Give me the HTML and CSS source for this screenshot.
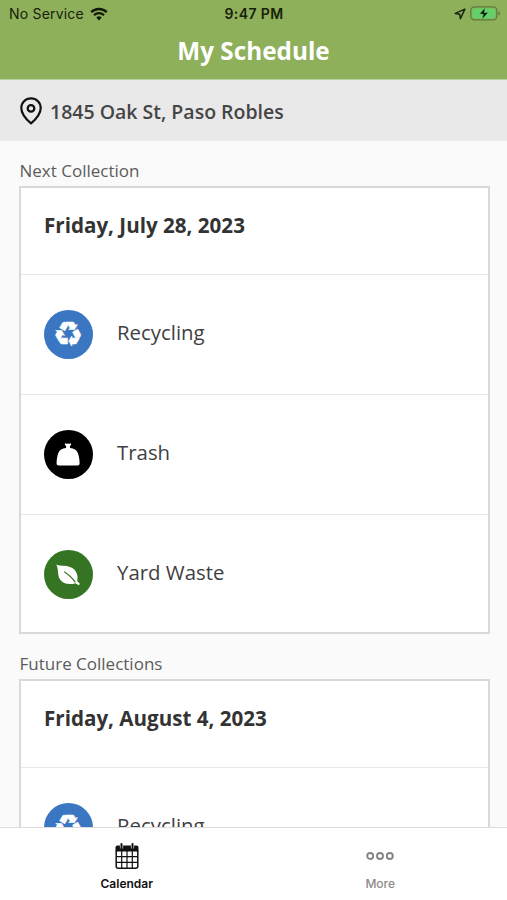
FILE: index.html
```html
<!DOCTYPE html>
<html lang="en">
<head>
    <meta charset="UTF-8">
    <meta name="viewport" content="width=device-width, initial-scale=1.0">
    <title>My Schedule</title>
    <link rel="stylesheet" href="styles.css">
</head>
<body>
    <div class="app">
        <header class="header">
            <div class="status-bar">
                <div class="status-left">
                    <span class="carrier">No Service</span>
                    <svg class="wifi" viewBox="0 0 18 14" width="18" height="14">
                        <path d="M1.2 5.2a11 11 0 0 1 15.6 0" fill="none" stroke="#111b08" stroke-width="2.5"/>
                        <path d="M4 8.2a7.1 7.1 0 0 1 10 0" fill="none" stroke="#111b08" stroke-width="2.3"/>
                        <path d="M6.3 10.6a3.9 3.9 0 0 1 5.4 0L9 13.4z" fill="#111b08"/>
                    </svg>
                </div>
                <span class="time">9:47 PM</span>
                <div class="status-right">
                    <svg viewBox="0 0 12 12" width="12" height="12">
                        <path d="M10.9 1.1L1.2 5.4l4.6.9.6 4.5z" fill="none" stroke="#1a260f" stroke-width="1.5" stroke-linejoin="round"/>
                    </svg>
                    <svg viewBox="0 0 31 15" width="31" height="15">
                        <rect x=".8" y=".8" width="26" height="13" rx="3.6" fill="none" stroke="#5d793c" stroke-width="1.2"/>
                        <rect x="2.4" y="2.4" width="22.8" height="9.8" rx="2.2" fill="#62d16c"/>
                        <path d="M28.4 5.2v4.3q1.6-.6 1.6-2.1t-1.6-2.2z" fill="#5d793c"/>
                        <path d="M15.2 1.5L9.5 8.1h3.8l-1.2 5.2 6.1-6.8h-4z" fill="#0b1408" stroke="#62d16c" stroke-width=".5"/>
                    </svg>
                </div>
            </div>
            <h1 class="title">My Schedule</h1>
        </header>

        <div class="address-bar">
            <svg viewBox="0 0 24 28" width="24" height="28">
                <path d="M12 1.4c-5.6 0-9.7 4.2-9.7 9.5 0 6 5.3 11.7 9.7 15.5 4.4-3.8 9.7-9.5 9.7-15.5 0-5.3-4.1-9.5-9.7-9.5z" fill="none" stroke="#111" stroke-width="2.2" stroke-linejoin="round"/>
                <circle cx="12" cy="11.4" r="3.3" fill="none" stroke="#111" stroke-width="2.3"/>
            </svg>
            <span class="address">1845 Oak St, Paso Robles</span>
        </div>

        <main class="content">
            <h2 class="section-label">Next Collection</h2>
            <section class="card">
                <div class="date">Friday, July 28, 2023</div>
                <div class="item">
                    <span class="icon recycling">&#x267B;&#xFE0E;</span>
                    <span class="name">Recycling</span>
                </div>
                <div class="item">
                    <span class="icon trash">
                        <svg viewBox="0 0 24 24" width="24" height="24">
                            <path d="M9 .3c1 .5 1.8.4 3 .1 1.2.3 2 .4 3-.1.5 1.3-.5 2.2-1.2 3.1l.4 1.6c3.7.3 6.6 1.900 7.700 5 1.100 3.200 1.700 6.900 1.700 10.600 0 1.300-.8 1.900-2 1.900H2.600c-1.200 0-2-.6-2-1.900 0-3.700.6-7.400 1.700-10.600C3.400 6.900 6.300 5.300 9.900 5l.4-1.600C9.500 2.500 8.500 1.600 9 .3z" fill="#fff"/>
                        </svg>
                    </span>
                    <span class="name">Trash</span>
                </div>
                <div class="item">
                    <span class="icon yard">
                        <svg viewBox="0 0 24 24" width="24" height="24">
                            <path d="M.2 1.500c5 2.200 11.300.2 16.500 3.700 4.600 3.300 5.600 8.700 4.500 13l2.700 2.600-1 1.400-3.500-2c-5.500 1.900-12.400 1-15.500-3.900C1 11.500 2.900 6.100.2 1.500z" fill="#fff"/>
                            <path d="M8.200 8.800c4.300 2.500 8 6.300 11.200 10.500" fill="none" stroke="#347423" stroke-width="1.100"/>
                        </svg>
                    </span>
                    <span class="name">Yard Waste</span>
                </div>
            </section>

            <h2 class="section-label">Future Collections</h2>
            <section class="card">
                <div class="date">Friday, August 4, 2023</div>
                <div class="item">
                    <span class="icon recycling">&#x267B;&#xFE0E;</span>
                    <span class="name">Recycling</span>
                </div>
            </section>
        </main>

        <nav class="tab-bar">
            <a class="tab active">
                <svg viewBox="0 0 24 28" width="24" height="28">
                    <path d="M.5 9.500V5.500Q.5 3.500 2.500 3.500h19q2 0 2 2v4z" fill="#111"/>
                    <path d="M6.500 2v4.500M17.500 2v4.500" stroke="#fff" stroke-width="3.200"/>
                    <path d="M6.500 2v4.500M17.500 2v4.500" stroke="#111" stroke-width="2" stroke-linecap="round"/>
                    <rect x="1.200" y="8" width="21.600" height="18.200" rx="2" fill="none" stroke="#111" stroke-width="1.500"/>
                    <path d="M6.700 9v17M12 9v17M17.300 9v17M1.500 14.600h21M1.500 20.300h21" stroke="#111" stroke-width="1.200"/>
                </svg>
                <span>Calendar</span>
            </a>
            <a class="tab">
                <svg viewBox="0 0 28 28" width="28" height="28">
                    <g fill="none" stroke="#858585" stroke-width="1.900">
                        <circle cx="4.200" cy="14" r="3"/>
                        <circle cx="14" cy="14" r="3"/>
                        <circle cx="23.800" cy="14" r="3"/>
                    </g>
                </svg>
                <span>More</span>
            </a>
        </nav>
    </div>
</body>
</html>
```
FILE: styles.css
```css
* {
    box-sizing: border-box;
}
body {
    margin: 0;
    font-family: 'Open Sans', 'Noto Sans', sans-serif;
    color: #3f3f3f;
    background: #fafafa;
}
.app {
    display: flex;
    flex-direction: column;
    height: 900px;
    overflow: hidden;
}
.header {
    height: 80px;
    flex-shrink: 0;
    background: #8eb05a;
    border-bottom: 1px solid #bccf9f;
}
.status-bar {
    display: grid;
    grid-template-columns: 1fr auto 1fr;
    align-items: center;
    height: 27px;
    padding: 0 6px 0 9px;
    font-family: Inter, 'Liberation Sans', sans-serif;
    font-size: 14px;
    color: #17210c;
}
.status-left,
.status-right {
    display: flex;
    align-items: center;
}
.status-left {
    gap: 6px;
}
.status-right {
    justify-content: flex-end;
    gap: 4px;
}
.carrier {
    letter-spacing: 0.2px;
}
.time {
    font-weight: 600;
    letter-spacing: 0.4px;
    padding-right: 2px;
}
.title {
    margin: 7px 0 0;
    font-size: 24.3px;
    line-height: 34px;
    font-weight: 700;
    text-align: center;
    color: #fff;
}
.address-bar {
    display: flex;
    align-items: center;
    gap: 7px;
    height: 61px;
    flex-shrink: 0;
    padding: 1px 19px 0;
    background: #e9e9e9;
}
.address {
    font-size: 19.5px;
    font-weight: 600;
    color: #454545;
}
.content {
    flex: 1;
    min-height: 0;
    overflow: hidden;
    padding: 0 17px 0 19px;
}
.section-label {
    margin: 0;
    height: 45px;
    padding: 18px 0 0 0.5px;
    font-size: 17px;
    line-height: 24px;
    font-weight: 400;
    color: #5c5c5c;
}
.card {
    background: #fff;
    border: 2px solid #d9d9d9;
}
.date {
    height: 86px;
    padding: 22px 23px 0;
    font-size: 20.6px;
    line-height: 30px;
    font-weight: 700;
    color: #333;
}
.item {
    display: flex;
    align-items: center;
    gap: 24.5px;
    height: 120px;
    padding: 0 22.5px;
    border-top: 1px solid #e8e8e8;
}
.item:last-child {
    height: 118px;
    padding-top: 2px;
}
.icon {
    display: flex;
    align-items: center;
    justify-content: center;
    width: 49px;
    height: 49px;
    border-radius: 50%;
    color: #fff;
}
.recycling {
    background: #3a76c1;
    font-family: 'DejaVu Sans', sans-serif;
    font-size: 34px;
    line-height: 1;
    padding-bottom: 2px;
    -webkit-text-stroke: 0.6px #fff;
}
.trash {
    background: #000;
}
.yard {
    background: #347423;
}
.name {
    font-size: 20.4px;
    line-height: 30px;
    padding-bottom: 6px;
}
.tab-bar {
    display: flex;
    height: 73px;
    flex-shrink: 0;
    background: #fff;
    border-top: 1px solid #dcdcdc;
}
.tab {
    flex: 1;
    display: flex;
    flex-direction: column;
    align-items: center;
    padding-top: 14px;
    gap: 6px;
    font-family: Inter, 'Liberation Sans', sans-serif;
    font-size: 12px;
    line-height: 16px;
    font-weight: 500;
    color: #8b8b8b;
}
.tab.active {
    color: #111;
    font-weight: 600;
}
```
